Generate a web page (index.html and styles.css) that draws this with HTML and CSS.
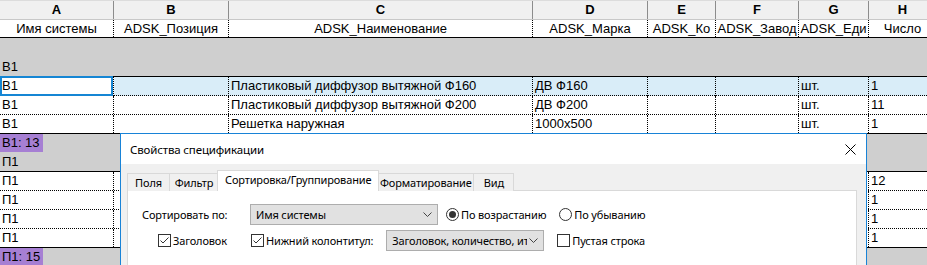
FILE: index.html
```html
<!DOCTYPE html>
<html lang="ru">
<head>
    <meta charset="UTF-8">
    <title>Спецификация</title>
    <link rel="stylesheet" href="styles.css">
</head>
<body>

<div class="sheet">
    <div class="row letters">
        <div class="cell">A</div><div class="cell">B</div><div class="cell">C</div><div class="cell">D</div>
        <div class="cell">E</div><div class="cell">F</div><div class="cell">G</div><div class="cell">H</div>
    </div>
    <div class="row fields">
        <div class="cell">Имя системы</div><div class="cell">ADSK_Позиция</div><div class="cell">ADSK_Наименование</div>
        <div class="cell">ADSK_Марка</div><div class="cell">ADSK_Ко</div><div class="cell">ADSK_Завод</div>
        <div class="cell">ADSK_Еди</div><div class="cell">Число</div>
    </div>

    <div class="row group"></div>
    <div class="row group top"><span>В1</span></div>

    <div class="row item selected">
        <div class="cell current">В1</div><div class="cell"></div><div class="cell">Пластиковый диффузор вытяжной Ф160</div>
        <div class="cell">ДВ Ф160</div><div class="cell"></div><div class="cell"></div><div class="cell">шт.</div><div class="cell">1</div>
    </div>
    <div class="row item">
        <div class="cell">В1</div><div class="cell"></div><div class="cell">Пластиковый диффузор вытяжной Ф200</div>
        <div class="cell">ДВ Ф200</div><div class="cell"></div><div class="cell"></div><div class="cell">шт.</div><div class="cell">11</div>
    </div>
    <div class="row item last">
        <div class="cell">В1</div><div class="cell"></div><div class="cell">Решетка наружная</div>
        <div class="cell">1000x500</div><div class="cell"></div><div class="cell"></div><div class="cell">шт.</div><div class="cell">1</div>
    </div>

    <div class="row group total"><span class="mark">В1: 13</span></div>
    <div class="row group top"><span>П1</span></div>

    <div class="row item">
        <div class="cell">П1</div><div class="cell"></div><div class="cell"></div><div class="cell"></div>
        <div class="cell"></div><div class="cell"></div><div class="cell"></div><div class="cell">12</div>
    </div>
    <div class="row item">
        <div class="cell">П1</div><div class="cell"></div><div class="cell"></div><div class="cell"></div>
        <div class="cell"></div><div class="cell"></div><div class="cell"></div><div class="cell">1</div>
    </div>
    <div class="row item">
        <div class="cell">П1</div><div class="cell"></div><div class="cell"></div><div class="cell"></div>
        <div class="cell"></div><div class="cell"></div><div class="cell"></div><div class="cell">1</div>
    </div>
    <div class="row item last">
        <div class="cell">П1</div><div class="cell"></div><div class="cell"></div><div class="cell"></div>
        <div class="cell"></div><div class="cell"></div><div class="cell"></div><div class="cell">1</div>
    </div>

    <div class="row group total"><span class="mark">П1: 15</span></div>

    <!-- dialog over the schedule -->
    <div class="dialog">
        <div class="dialog-title">
            <span>Свойства спецификации</span>
            <svg class="close" width="11" height="11" viewBox="0 0 11 11">
                <path d="M0.5 0.5 L10.5 10.5 M10.5 0.5 L0.5 10.5" stroke="#000" stroke-width="1"/>
            </svg>
        </div>
        <div class="dialog-body">
            <div class="tabs">
                <div class="tab tab-fields">Поля</div>
                <div class="tab tab-filter">Фильтр</div>
                <div class="tab active">Сортировка/Группирование</div>
                <div class="tab tab-format">Форматирование</div>
                <div class="tab tab-view">Вид</div>
            </div>
            <div class="panel">
                <div class="line">
                    <span class="label">Сортировать по:</span>
                    <div class="combo wide">
                        <span>Имя системы</span>
                        <svg width="9" height="5" viewBox="0 0 9 5"><path d="M0.5 0.5 L4.5 4.5 L8.5 0.5" fill="none" stroke="#444"/></svg>
                    </div>
                    <label class="option"><span class="radio on"></span>По возрастанию</label>
                    <label class="option"><span class="radio"></span>По убыванию</label>
                </div>
                <div class="line second">
                    <label class="option first-check">
                        <svg class="check" width="13" height="13" viewBox="0 0 13 13">
                            <rect x="0.5" y="0.5" width="12" height="12" fill="#fff" stroke="#333"/>
                            <path d="M2.5 6.5 L5 9 L10.5 3.5" fill="none" stroke="#333"/>
                        </svg>Заголовок</label>
                    <label class="option footer-check">
                        <svg class="check" width="13" height="13" viewBox="0 0 13 13">
                            <rect x="0.5" y="0.5" width="12" height="12" fill="#fff" stroke="#333"/>
                            <path d="M2.5 6.5 L5 9 L10.5 3.5" fill="none" stroke="#333"/>
                        </svg>Нижний колонтитул:</label>
                    <div class="combo narrow">
                        <span>Заголовок, количество, ит</span>
                        <svg width="9" height="5" viewBox="0 0 9 5"><path d="M0.5 0.5 L4.5 4.5 L8.5 0.5" fill="none" stroke="#444"/></svg>
                    </div>
                    <label class="option">
                        <svg class="check" width="13" height="13" viewBox="0 0 13 13">
                            <rect x="0.5" y="0.5" width="12" height="12" fill="#fff" stroke="#333"/>
                        </svg>Пустая строка</label>
                </div>
            </div>
        </div>
    </div>
</div>

</body>
</html>
```

FILE: styles.css
```css
body {
    margin: 0;
    width: 927px;
    height: 265px;
    overflow: hidden;
    background: #fff;
    font-family: "Liberation Sans", Arial, sans-serif;
    font-size: 13px;
    color: #000;
}

.sheet {
    position: relative;
    width: 927px;
    height: 265px;
    overflow: hidden;
}

.row {
    display: grid;
    grid-template-columns: 114px 115px 304px 115px 68px 83px 70px 68px;
    box-sizing: border-box;
}

.cell {
    box-sizing: border-box;
    overflow: hidden;
    white-space: nowrap;
    padding-left: 2px;
    line-height: 18px;
}

/* column letters */
.letters {
    height: 20px;
    background: #f0f0f0;
    border-top: 1px solid #dcdcdc;
    border-bottom: 1px solid #c8c8c8;
}

.letters .cell {
    text-align: center;
    font-weight: bold;
    padding: 0;
    border-right: 1px solid #8c8c8c;
}

/* field names */
.fields {
    height: 18px;
    border-bottom: 1px solid #000;
}

.fields .cell {
    text-align: center;
    padding: 0;
    line-height: 17px;
    border-right: 1px dotted #000;
}

/* grey group header / footer rows */
.group {
    display: block;
    height: 19px;
    background: #cfcfcf;
    line-height: 19px;
    padding-left: 2px;
}

.group.top {
    height: 20px;
    border-bottom: 1px solid #000;
}

.group.total {
    height: 18px;
    line-height: 18px;
    padding-left: 0;
}

.mark {
    display: inline-block;
    background: #a67fd3;
    padding: 0 3px 0 2px;
}

/* data rows */
.item {
    height: 19px;
    border-bottom: 1px dotted #000;
}

.item.last {
    border-bottom: 1px solid #000;
}

.item .cell {
    border-right: 1px dotted #000;
}

.selected {
    background: #d9edf8;
}

.selected .current {
    background: #fff;
    box-shadow: inset 0 0 0 2px #1586d4;
    margin-top: -1px;
    height: 20px;
    line-height: 20px;
}

/* dialog */
.dialog {
    position: absolute;
    left: 120px;
    top: 133px;
    width: 747px;
    height: 160px;
    box-sizing: border-box;
    border: 1px solid #1883d7;
    background: #f0f0f0;
    font-family: "Noto Sans", "Segoe UI", sans-serif;
    font-size: 11px;
    letter-spacing: -0.15px;
    color: #000;
}

.dialog-title {
    height: 30px;
    background: #fff;
    display: flex;
    align-items: center;
    justify-content: space-between;
    padding: 0 10px 0 9px;
    font-size: 11.5px;
}

.dialog-title span {
    margin-top: 1px;
}

.dialog-body {
    padding: 7px 9px 0 6px;
}

.tabs {
    display: flex;
    align-items: flex-end;
    height: 20px;
    margin-bottom: -1px;
    position: relative;
    z-index: 1;
}

.tab {
    height: 18px;
    line-height: 17px;
    box-sizing: border-box;
    padding: 0;
    text-align: center;
    border: 1px solid #d9d9d9;
    border-bottom: none;
    margin-right: -1px;
    background: #f0f0f0;
    white-space: nowrap;
}

.tab-fields { width: 43px; }
.tab-filter { width: 50px; }
.tab-format { width: 97px; }
.tab-view { width: 41px; }

.tab.active {
    height: 21px;
    line-height: 18px;
    padding: 0 7px;
    background: #fff;
    margin-left: -1px;
    margin-right: -2px;
    position: relative;
}

.panel {
    height: 90px;
    background: #fff;
    border: 1px solid #d9d9d9;
    padding: 13px 0 0 14px;
}

.line {
    display: flex;
    align-items: center;
    height: 21px;
}

.line.second {
    margin-top: 5px;
}

.label {
    width: 108px;
}

.combo {
    height: 21px;
    box-sizing: border-box;
    background: #e1e1e1;
    border: 1px solid #adadad;
    display: flex;
    align-items: center;
    justify-content: space-between;
    padding: 0 5px 0 5px;
    overflow: hidden;
    white-space: nowrap;
}

.combo span {
    overflow: hidden;
    flex: 1;
}

.combo svg {
    flex: none;
    margin-left: 2px;
}

.combo.wide {
    width: 188px;
    margin-right: 8px;
}

.combo.narrow {
    width: 158px;
    margin-right: 13px;
}

.option {
    display: flex;
    align-items: center;
    margin-right: 13px;
}

.option .check {
    margin-right: 2px;
}

.first-check {
    margin-left: 16px;
    margin-right: 24px;
}

.footer-check {
    margin-right: 13px;
}

.radio {
    width: 13px;
    height: 13px;
    box-sizing: border-box;
    border: 1px solid #333;
    border-radius: 50%;
    margin-right: 2px;
    display: flex;
    align-items: center;
    justify-content: center;
}

.radio.on::after {
    content: "";
    width: 7px;
    height: 7px;
    border-radius: 50%;
    background: #333;
}
```
